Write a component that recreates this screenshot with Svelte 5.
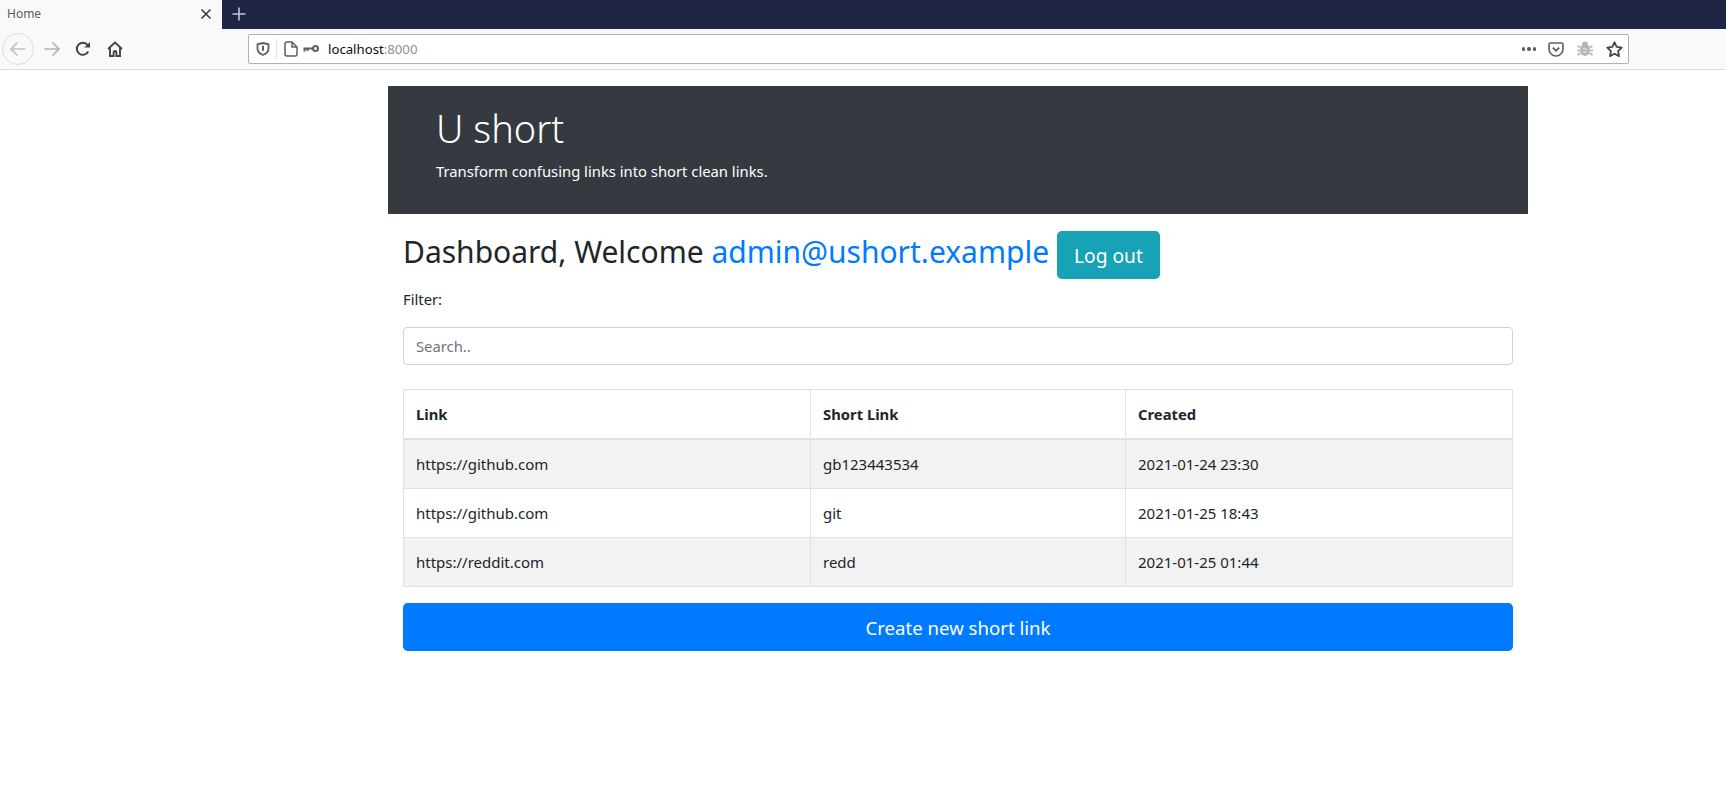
<script lang="ts">
    const rows = [
        { link: 'https://github.com', short: 'gb123443534', created: '2021-01-24 23:30' },
        { link: 'https://github.com', short: 'git', created: '2021-01-25 18:43' },
        { link: 'https://reddit.com', short: 'redd', created: '2021-01-25 01:44' }
    ]
</script>

<div class="tabbar">
    <div class="tab">
        <span class="tab-title">Home</span>
        <svg class="tab-close" width="12" height="12" viewBox="0 0 12 12" fill="none" stroke="#3a3a3c" stroke-width="1.6">
            <path d="M1.5 1.5l9 9M10.5 1.5l-9 9" />
        </svg>
    </div>
    <svg class="new-tab" width="16" height="16" viewBox="0 0 16 16" fill="none" stroke="#c4c6d0" stroke-width="1.6">
        <path d="M8 1.5v13M1.5 8h13" />
    </svg>
</div>

<div class="toolbar">
    <div class="nav">
        <span class="back">
            <svg width="18" height="18" viewBox="0 0 18 18" fill="none" stroke="#c2c2c4" stroke-width="1.7">
                <path d="M16.5 9H2M8.5 2.5L2 9l6.5 6.5" />
            </svg>
        </span>
        <svg class="forward" width="18" height="18" viewBox="0 0 18 18" fill="none" stroke="#b4b4b6" stroke-width="1.7">
            <path d="M1.5 9H16M9.5 2.5L16 9l-6.5 6.5" />
        </svg>
        <svg class="reload" width="16" height="16" viewBox="0 0 16 16" fill="none" stroke="#444446" stroke-width="2">
            <path d="M13.2 10.5A6 6 0 1 1 12.6 4.2L14 5.6" />
            <path d="M15 1v5.6H9.4z" fill="#444446" stroke="none" />
        </svg>
        <svg class="home" width="16" height="16" viewBox="0 0 16 16" fill="none" stroke="#444446" stroke-width="1.9">
            <path d="M1 8l7-6.5L15 8M3 6.8V15h3.6v-3.6a1.4 1.4 0 0 1 2.8 0V15H13V6.8" />
        </svg>
    </div>

    <div class="urlbar">
        <svg class="shield" width="14" height="14" viewBox="0 0 14 14" fill="none" stroke="#5f5f61" stroke-width="1.8">
            <path d="M7 1l5.5 1.3v4.2c0 3.2-2.5 5.4-5.5 6.5-3-1.1-5.5-3.3-5.5-6.5V2.3z" />
            <path d="M7 3.8v5" stroke-width="2" />
        </svg>
        <span class="divider"></span>
        <svg class="page" width="14" height="16" viewBox="0 0 14 16" fill="none" stroke="#5f5f61" stroke-width="1.5">
            <path d="M1 3a2 2 0 0 1 2-2h5l5 5v7a2 2 0 0 1-2 2H3a2 2 0 0 1-2-2zM8 1v5h5" />
        </svg>
        <svg class="key" width="16" height="8" viewBox="0 0 16 8" fill="none" stroke="#5f5f61" stroke-width="2">
            <circle cx="12.5" cy="3.5" r="2.5" />
            <path d="M10 3.5H.5M1.5 3.5v3M4.5 3.5V6" />
        </svg>
        <span class="url">localhost<span class="port">:8000</span></span>
        <span class="url-space"></span>
        <span class="dots"><i></i><i></i><i></i></span>
        <svg class="pocket" width="16" height="15" viewBox="0 0 16 15" fill="none" stroke="#5f5f61" stroke-width="1.6">
            <path d="M2.3 1h11.4A1.3 1.3 0 0 1 15 2.3V7a7 7 0 0 1-14 0V2.3A1.3 1.3 0 0 1 2.3 1z" />
            <path d="M4.8 5.600L8 8.700l3.200-3.100" stroke-width="1.9" />
        </svg>
        <svg class="bug" width="16" height="16" viewBox="0 0 16 16" fill="#b5b5b7" stroke="#b5b5b7">
            <ellipse cx="8" cy="9" rx="5" ry="6" stroke="none" />
            <circle cx="8" cy="3.5" r="3" stroke="none" />
            <path d="M.5 5l3 1.5M15.5 5l-3 1.5M0 9.5h3M16 9.5h-3M.5 14l3-2M15.5 14l-3-2" stroke-width="1.6" />
            <path d="M6 8h4M6 11h4" stroke="#f0f0f1" stroke-width="1.1" />
        </svg>
        <svg class="star" width="17" height="16" viewBox="0 0 17 16" fill="none" stroke="#444446" stroke-width="1.8" stroke-linejoin="round">
            <path d="M8.5 1.3l2.200 4.600 5 .7-3.600 3.500.9 5-4.500-2.400L4 15.100l.9-5L1.300 6.600l5-.7z" />
        </svg>
    </div>
</div>

<main class="container">
    <header class="jumbotron">
        <h1>U short</h1>
        <p>Transform confusing links into short clean links.</p>
    </header>

    <section class="content">
        <div class="welcome">
            <h2>Dashboard, Welcome <a href="#top">admin@ushort.example</a></h2>
            <button class="btn btn-info" type="button">Log out</button>
        </div>

        <label class="filter-label" for="search">Filter:</label>
        <input id="search" class="search" type="text" placeholder="Search.." />

        <table>
            <thead>
                <tr>
                    <th class="col-link">Link</th>
                    <th class="col-short">Short Link</th>
                    <th>Created</th>
                </tr>
            </thead>
            <tbody>
                {#each rows as row}
                    <tr>
                        <td>{row.link}</td>
                        <td>{row.short}</td>
                        <td>{row.created}</td>
                    </tr>
                {/each}
            </tbody>
        </table>

        <button class="btn btn-primary" type="button">Create new short link</button>
    </section>
</main>

<style>
    :global(body) {
        margin: 0;
        background: #fff;
        color: #212529;
        font-family: "Noto Sans", "Open Sans", sans-serif;
    }

    .tabbar {
        display: flex;
        align-items: center;
        height: 29px;
        background: #1f2344;
    }

    .tab {
        display: flex;
        align-items: center;
        justify-content: space-between;
        box-sizing: border-box;
        width: 222px;
        height: 29px;
        padding: 0 10px 2px 7px;
        background: #f9f9fa;
    }

    .tab-title {
        font-size: 12px;
        color: #5a5a5f;
    }

    .new-tab {
        margin-left: 9px;
        margin-bottom: 2px;
    }

    .toolbar {
        display: flex;
        align-items: center;
        box-sizing: border-box;
        height: 41px;
        background: #f9f9fa;
        border-bottom: 1px solid #dcdcde;
    }

    .nav {
        display: flex;
        align-items: center;
        box-sizing: border-box;
        width: 248px;
        padding-left: 2px;
    }

    .back {
        display: flex;
        align-items: center;
        justify-content: center;
        box-sizing: border-box;
        width: 32px;
        height: 32px;
        border: 1px solid #dedee0;
        border-radius: 50%;
    }

    .forward {
        margin-left: 9px;
    }

    .reload {
        margin-left: 14px;
    }

    .home {
        margin-left: 16px;
    }

    .urlbar {
        display: flex;
        align-items: center;
        box-sizing: border-box;
        width: 1381px;
        height: 30px;
        padding: 0 5px 0 7px;
        background: #fff;
        border: 1px solid #b1b1b3;
        border-radius: 2px;
    }

    .divider {
        width: 1px;
        height: 20px;
        margin: 0 7px 0 6px;
        background: #e2e2e4;
    }

    .key {
        margin-left: 5px;
    }

    .url {
        margin-left: 9px;
        font-size: 13.2px;
        color: #0c0c0d;
    }

    .port {
        color: #8a8f98;
    }

    .url-space {
        flex: 1;
    }

    .dots {
        display: flex;
        gap: 2px;
    }

    .dots i {
        width: 3.5px;
        height: 3.5px;
        border-radius: 50%;
        background: #59595b;
    }

    .pocket {
        margin-left: 12px;
    }

    .bug {
        margin-left: 13px;
    }

    .star {
        margin-left: 13px;
    }

    .container {
        box-sizing: border-box;
        width: 1140px;
        margin: 16px 0 0 388px;
    }

    .jumbotron {
        box-sizing: border-box;
        height: 128px;
        padding: 18px 48px 0;
        background: #343a40;
        color: #fff;
    }

    h1 {
        margin: 0;
        font-size: 38px;
        font-weight: 300;
        line-height: 48px;
    }

    .jumbotron p {
        margin: 7px 0 0;
        font-size: 14.8px;
        line-height: 24px;
    }

    .content {
        display: flex;
        flex-direction: column;
        padding: 17px 15px 0;
    }

    .welcome {
        display: flex;
        align-items: center;
        gap: 8px;
    }

    h2 {
        margin: 0 0 6px;
        font-size: 30px;
        font-weight: 400;
        line-height: 38px;
    }

    a {
        color: #007bff;
        text-decoration: none;
    }

    .btn {
        box-sizing: border-box;
        height: 48px;
        padding: 0 16px;
        border: 0;
        border-radius: 4.8px;
        color: #fff;
        font-family: inherit;
        font-size: 18.6px;
    }

    .btn-info {
        padding: 0 17px;
        font-size: 19.2px;
        background: #17a2b8;
    }

    .btn-primary {
        background: #007bff;
    }

    .filter-label {
        margin-top: 8px;
        font-size: 14.8px;
        line-height: 24px;
    }

    .search {
        box-sizing: border-box;
        height: 38px;
        margin-top: 16px;
        padding: 0 12px;
        border: 1px solid #ced4da;
        border-radius: 4px;
        font-family: inherit;
        font-size: 14.8px;
        color: #495057;
    }

    .search::placeholder {
        color: #6c757d;
    }

    table {
        width: 100%;
        margin: 24px 0 16px;
        border-collapse: collapse;
        table-layout: fixed;
        font-size: 15px;
    }

    th,
    td {
        box-sizing: border-box;
        padding: 0 12px;
        border: 1px solid #dee2e6;
        text-align: left;
    }

    th {
        height: 49px;
        border-bottom-width: 2px;
        font-size: 14.8px;
        font-weight: 700;
    }

    td {
        height: 49px;
    }

    tbody tr:first-child td {
        height: 50px;
    }

    .col-link {
        width: 407px;
    }

    .col-short {
        width: 315px;
    }

    tbody tr:nth-child(odd) {
        background: #f2f2f2;
    }
</style>
